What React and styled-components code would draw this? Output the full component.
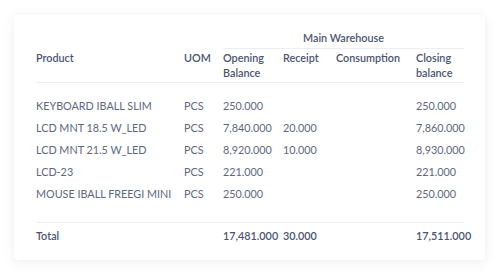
import React from 'react';
import styled, { createGlobalStyle } from 'styled-components';

const GlobalStyle = createGlobalStyle`
  html, body {
    margin: 0;
    padding: 0;
    background: #ffffff;
  }
  body {
    font-family: Lato, "Noto Sans", sans-serif;
  }
`;

const Page = styled.div`
  width: 500px;
  height: 275px;
  padding: 15px 15px 15px 14px;
  box-sizing: border-box;
`;

const Card = styled.div`
  width: 471px;
  height: 245px;
  box-sizing: border-box;
  background: #ffffff;
  border-radius: 3px;
  box-shadow: 0 2px 12px rgba(40, 50, 80, 0.09);
  padding: 15px 21px 0 22px;
`;

const Table = styled.table`
  width: 428px;
  border-collapse: collapse;
  table-layout: fixed;
  font-size: 10.8px;
  color: #5d6780;
`;

const HeadCell = styled.th`
  text-align: left;
  font-weight: 600;
  color: #4a5470;
  padding: 0;
  vertical-align: top;
  line-height: 15px;
`;

const GroupCell = styled(HeadCell)`
  text-align: center;
  height: 15px;
  padding-bottom: 3px;
  border-bottom: ${p => (p.$line ? '1px solid #eceef3' : 'none')};
`;

const ColumnRow = styled.tr`
  th {
    height: 30px;
    padding: 1px 0 2px;
    border-bottom: 1px solid #eceef3;
  }
`;

const Body = styled.tbody`
  td {
    padding: 0;
    height: 22px;
    line-height: 22px;
    white-space: nowrap;
  }
  tr:first-child td {
    padding-top: 12px;
  }
  tr:last-child td {
    padding-bottom: 17px;
  }
`;

const Foot = styled.tfoot`
  td {
    padding: 0;
    height: 26px;
    line-height: 26px;
    font-weight: 600;
    color: #4a5470;
    border-top: 1px solid #eceef3;
    white-space: nowrap;
  }
`;

const Cell = styled.td`
  text-align: ${p => (p.$right ? 'right' : 'left')};
`;

const rows = [
  ['KEYBOARD IBALL SLIM', 'PCS', '250.000', '', '', '250.000'],
  ['LCD MNT 18.5 W_LED', 'PCS', '7,840.000', '20.000', '', '7,860.000'],
  ['LCD MNT 21.5 W_LED', 'PCS', '8,920.000', '10.000', '', '8,930.000'],
  ['LCD-23', 'PCS', '221.000', '', '', '221.000'],
  ['MOUSE IBALL FREEGI MINI', 'PCS', '250.000', '', '', '250.000'],
];

export default function App() {
  return (
    <>
      <GlobalStyle />
      <Page>
        <Card>
          <Table>
            <colgroup>
              <col style={{ width: 148 }} />
              <col style={{ width: 39 }} />
              <col style={{ width: 60 }} />
              <col style={{ width: 53 }} />
              <col style={{ width: 80 }} />
              <col style={{ width: 48 }} />
            </colgroup>
            <thead>
              <tr>
                <GroupCell />
                <GroupCell />
                <GroupCell colSpan={4} $line>Main Warehouse</GroupCell>
              </tr>
              <ColumnRow>
                <HeadCell>Product</HeadCell>
                <HeadCell>UOM</HeadCell>
                <HeadCell>Opening<br />Balance</HeadCell>
                <HeadCell>Receipt</HeadCell>
                <HeadCell>Consumption</HeadCell>
                <HeadCell>Closing<br />balance</HeadCell>
              </ColumnRow>
            </thead>
            <Body>
              {rows.map(r => (
                <tr key={r[0]}>
                  {r.map((v, i) => (
                    <Cell key={i}>{v}</Cell>
                  ))}
                </tr>
              ))}
            </Body>
            <Foot>
              <tr>
                <Cell>Total</Cell>
                <Cell />
                <Cell>17,481.000</Cell>
                <Cell>30.000</Cell>
                <Cell />
                <Cell>17,511.000</Cell>
              </tr>
            </Foot>
          </Table>
        </Card>
      </Page>
    </>
  );
}
